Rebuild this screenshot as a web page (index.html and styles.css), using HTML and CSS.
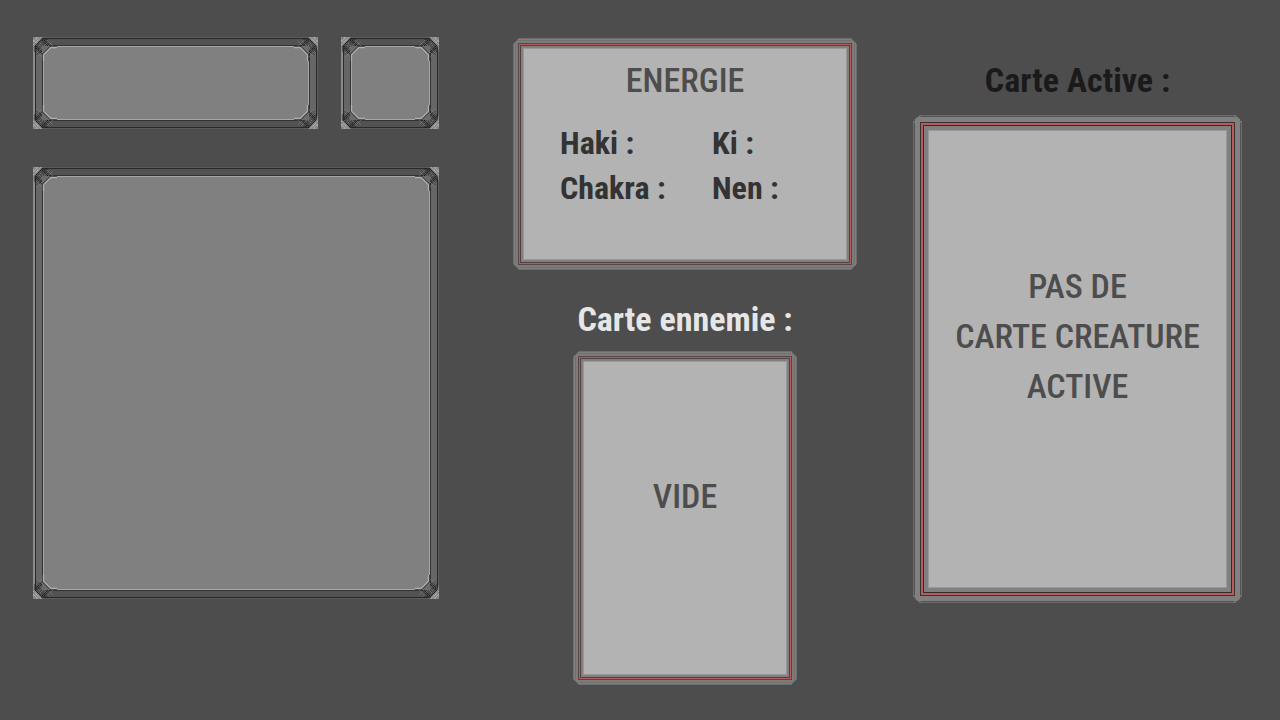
FILE: index.html
```
<!DOCTYPE html>
<html lang="fr">
<head>
<meta charset="utf-8">
<meta name="viewport" content="width=device-width, initial-scale=1">
<title>Plateau de jeu</title>
<link rel="stylesheet" href="styles.css">
</head>
<body>
<svg class="defs" aria-hidden="true">
  <symbol id="corner" viewBox="0 0 24 24">
    <path d="M3 9 9 3H18L9 16L3 18z" fill="#4a4a4a"/>
    <path d="M0 0H10L2 9L0 15z" fill="#858585"/>
    <path d="M0 5 5 0M0 8 8 0M3 0 5 4M0 3 4 5" stroke="#b0b0b0" stroke-dasharray="2 1"/>
    <path d="M2 15V9L9 2H15" fill="none" stroke="#242424"/>
    <path d="M9 3 17 11M11 3 18 10M3 9 11 17M3 11 10 18" stroke="#1c1c1c" stroke-dasharray="2 1"/>
    <path d="M7 6 14 13M6 8 12 14" stroke="#777" stroke-dasharray="2 1"/>
    <path d="M4 20 20 4M3 17 17 3M14 3 22 11M3 14 11 22" fill="none" stroke="#7c7c7c" stroke-opacity=".6"/>
    <path d="M9 9H19V11L11 19H9z" fill="#6b6b6b"/>
    <path d="M9.500 24V17L17 9.500H24" fill="none" stroke="#333"/>
    <path d="M10.500 24V18L18 10.500H24" fill="none" stroke="#b0b0b0" stroke-width="1.300"/>
  </symbol>
  <symbol id="chamfer" viewBox="0 0 8 8">
    <path d="M0 6 6 0" fill="none" stroke="#3c3c3c" stroke-dasharray="2 1"/>
    <path d="M1 8V7L7 1H8" fill="none" stroke="#7c7c7c"/>
  </symbol>
</svg>
<main class="board">
  <section class="side">
    <div class="top-row">
      <div class="ornate wide">
        <svg class="corner tl"><use href="#corner"/></svg><svg class="corner tr"><use href="#corner"/></svg><svg class="corner bl"><use href="#corner"/></svg><svg class="corner br"><use href="#corner"/></svg>
      </div>
      <div class="ornate small">
        <svg class="corner tl"><use href="#corner"/></svg><svg class="corner tr"><use href="#corner"/></svg><svg class="corner bl"><use href="#corner"/></svg><svg class="corner br"><use href="#corner"/></svg>
      </div>
    </div>
    <div class="ornate log">
      <svg class="corner tl"><use href="#corner"/></svg><svg class="corner tr"><use href="#corner"/></svg><svg class="corner bl"><use href="#corner"/></svg><svg class="corner br"><use href="#corner"/></svg>
    </div>
  </section>
  <section class="middle">
    <div class="card energy">
      <svg class="chamfer tl"><use href="#chamfer"/></svg><svg class="chamfer tr"><use href="#chamfer"/></svg><svg class="chamfer bl"><use href="#chamfer"/></svg><svg class="chamfer br"><use href="#chamfer"/></svg>
      <div class="face">
        <h2 class="card-title">ENERGIE</h2>
        <ul class="stats">
          <li>Haki :</li><li>Ki :</li>
          <li>Chakra :</li><li>Nen :</li>
        </ul>
      </div>
    </div>
    <h2 class="label enemy-label">Carte ennemie :</h2>
    <div class="card enemy">
      <svg class="chamfer tl"><use href="#chamfer"/></svg><svg class="chamfer tr"><use href="#chamfer"/></svg><svg class="chamfer bl"><use href="#chamfer"/></svg><svg class="chamfer br"><use href="#chamfer"/></svg>
      <div class="face centered"><p class="card-text">VIDE</p></div>
    </div>
  </section>
  <section class="active">
    <h2 class="label active-label">Carte Active :</h2>
    <div class="card creature">
      <svg class="chamfer tl"><use href="#chamfer"/></svg><svg class="chamfer tr"><use href="#chamfer"/></svg><svg class="chamfer bl"><use href="#chamfer"/></svg><svg class="chamfer br"><use href="#chamfer"/></svg>
      <div class="face centered"><p class="card-text">PAS DE<br>CARTE CREATURE<br>ACTIVE</p></div>
    </div>
  </section>
</main>
</body>
</html>
```
FILE: styles.css
```
* { box-sizing: border-box; }
body {
  margin: 0;
  background: #4d4d4d;
  color: #4d4d4d;
  font-family: "Agency FB", "Roboto Condensed", "Liberation Sans Narrow", "DejaVu Sans Condensed", sans-serif;
  font-weight: 700;
}
h2, p, ul { margin: 0; padding: 0; font-weight: inherit; }
.defs { position: absolute; width: 0; height: 0; }
.board {
  display: grid;
  grid-template-columns: 424fr 344fr 329fr;
  column-gap: 56px;
  padding: 37px 38px 35px 33px;
  min-height: 100vh;
}
.side { margin-right: 18px; }
.top-row { display: flex; gap: 23px; margin-bottom: 38px; }

.ornate {
  position: relative;
  border: 1px solid #5c5c5c;
  border-left: 2px solid #8c8c8c;
  background: #808080;
  box-shadow: inset 0 0 0 1px #292929, inset 0 0 0 8px #333, inset 0 0 0 9px #a6a6a6;
}
.ornate::before {
  content: "";
  position: absolute;
  inset: 1px;
  border: 6px solid #666;
  border-top-color: #525252;
  border-bottom-color: #525252;
}
.wide { flex: 1; min-height: 92px; }
.small { flex: 0 0 98px; }
.log { min-height: 432px; }
.corner { position: absolute; width: 24px; height: 24px; }
.corner.tl { top: -1px; left: -2px; }
.corner.tr { top: -1px; right: -1px; transform: scaleX(-1); }
.corner.bl { bottom: -1px; left: -2px; transform: scaleY(-1); }
.corner.br { bottom: -1px; right: -1px; transform: scale(-1); }

.card {
  position: relative;
  display: flex;
  padding: 10px;
  background: #808080;
  box-shadow: inset 0 0 0 1px #6c6c6c, inset 0 0 0 2px #808080, inset 0 0 0 3px #707070, inset 0 0 0 5px #7c7c7c, inset 0 0 0 6px #5c4444, inset 0 0 0 7px #b65c5c, inset 0 0 0 8px #4f4242;
  clip-path: polygon(6px 0, calc(100% - 6px) 0, 100% 6px, 100% calc(100% - 6px), calc(100% - 6px) 100%, 6px 100%, 0 calc(100% - 6px), 0 6px);
}
.chamfer { position: absolute; width: 8px; height: 8px; }
.chamfer.tl { top: 0; left: 0; }
.chamfer.tr { top: 0; right: 0; transform: scaleX(-1); }
.chamfer.bl { bottom: 0; left: 0; transform: scaleY(-1); }
.chamfer.br { bottom: 0; right: 0; transform: scale(-1); }
.face { flex: 1; background: #b3b3b3; border: 1px solid #999; }
.centered { display: flex; align-items: center; justify-content: center; }
.label, .card-title, .card-text { font-size: 34px; text-align: center; }
.card-title, .card-text { font-weight: 500; }

.middle { padding-top: 1px; }
.energy { min-height: 232px; }
.card-title { line-height: 40px; margin-top: 11px; }
.stats {
  display: grid;
  grid-template-columns: 152px auto;
  margin-top: 21px;
  padding-left: 36px;
  list-style: none;
  color: #333;
  font-size: 32px;
  line-height: 45px;
}
.enemy-label { margin: 24px 0 7px; line-height: 50px; color: #e6e6e6; }
.enemy { width: 65%; min-height: 334px; margin: 0 auto; }
.enemy .card-text { margin-bottom: 44px; }
.active-label { padding-top: 18px; line-height: 50px; color: #1a1a1a; }
.creature {
  min-height: 488px;
  margin-top: 10px;
  padding: 15px;
  box-shadow: inset 0 0 0 1px #6a6a6a, inset 0 0 0 2px #555, inset 0 0 0 7px #808080, inset 0 0 0 8px #3c3030, inset 0 0 0 10px #b65c5c, inset 0 0 0 11px #352b2b;
}
.creature .card-text { line-height: 50px; margin-bottom: 46px; }
```
